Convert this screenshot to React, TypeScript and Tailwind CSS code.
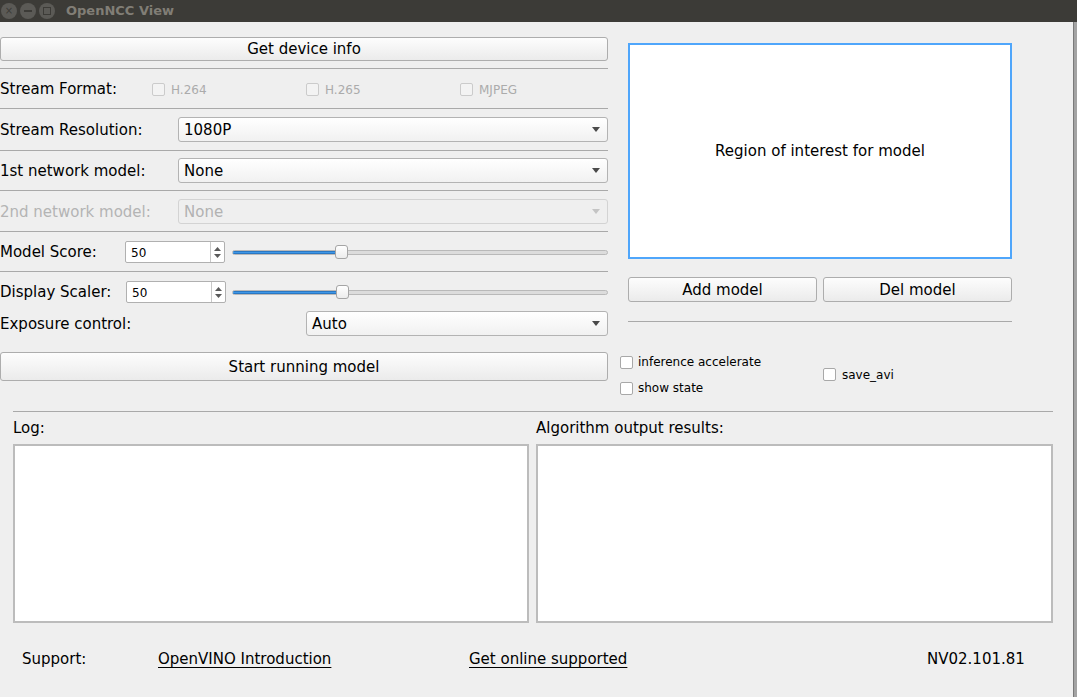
import React from "react";

function Sep({ className = "" }: { className?: string }) {
  return <div className={`h-px bg-[#a9a9a9] ${className}`} />;
}

function PushButton({ label, className = "" }: { label: string; className?: string }) {
  return (
    <div
      className={`flex items-center justify-center rounded-[3px] border border-[#adadad] bg-linear-to-b from-[#fdfdfd] to-[#ebebeb] pt-px text-[15px] text-black ${className}`}
    >
      {label}
    </div>
  );
}

function Arrow({ color }: { color: string }) {
  return (
    <svg width="8" height="5" viewBox="0 0 8 5">
      <polygon points="0,0 8,0 4,5" fill={color} />
    </svg>
  );
}

function Combo({ value, disabled, className = "" }: { value: string; disabled?: boolean; className?: string }) {
  return (
    <div
      className={`flex h-[25px] items-center justify-between rounded-[3px] border pl-[5px] pr-[7px] text-[15px] ${
        disabled
          ? "border-[#d3d3d3] bg-[#efefef] text-[#b2b2b2]"
          : "border-[#b3b3b3] bg-linear-to-b from-white to-[#f1f1f1] text-black"
      } ${className}`}
    >
      <span className="pt-px">{value}</span>
      <Arrow color={disabled ? "#c4c4c4" : "#4a4a4a"} />
    </div>
  );
}

function Check({ label, disabled, gap = "ml-[6px]" }: { label: string; disabled?: boolean; gap?: string }) {
  return (
    <div className="flex items-center">
      <div
        className={`h-[13px] w-[13px] rounded-[2px] border ${
          disabled ? "border-[#cbcbcb] bg-[#f3f3f3]" : "border-[#a8a8a8] bg-white"
        }`}
      />
      <span className={`${gap} text-[12px] ${disabled ? "text-[#ababab]" : "text-black"}`}>{label}</span>
    </div>
  );
}

function SpinBox({ value }: { value: string }) {
  return (
    <div className="flex h-[22px] w-[100px] items-stretch rounded-[2px] border border-[#b0b0b0] bg-white">
      <div className="flex flex-1 items-center pl-[5px] pt-px text-[12px] text-black">{value}</div>
      <div className="flex w-[14px] flex-col items-center justify-center gap-[3px] border-l border-[#c8c8c8]">
        <svg width="7" height="4" viewBox="0 0 7 4">
          <polygon points="0,4 7,4 3.5,0" fill="#5a5a5a" />
        </svg>
        <svg width="7" height="4" viewBox="0 0 7 4">
          <polygon points="0,0 7,0 3.5,4" fill="#5a5a5a" />
        </svg>
      </div>
    </div>
  );
}

function Slider({ pos }: { pos: number }) {
  return (
    <div className="relative flex h-[16px] flex-1 items-center">
      <div className="flex h-[5px] w-full overflow-hidden rounded-full border border-[#b9b9b9] bg-[#dcdcdc]">
        <div className="h-full border-y border-[#2a78c4] bg-[#3f97e6]" style={{ width: pos + 4 }} />
      </div>
      <div
        className="absolute top-[1px] h-[14px] w-[13px] rounded-[3px] border border-[#a5a5a5] bg-linear-to-b from-white to-[#ececec]"
        style={{ left: pos }}
      />
    </div>
  );
}

export default function App() {
  return (
    <div className="flex h-[697px] w-[1077px] flex-col overflow-hidden bg-[#efefef] font-['DejaVu_Sans',sans-serif] text-black">
      {/* title bar */}
      <div className="flex h-[22px] items-center bg-[#3c3b37]">
        <div className="ml-[1px] flex items-center gap-[3px]">
          <div className="flex h-[16px] w-[16px] items-center justify-center rounded-full bg-[#5b5a56] text-[10px] leading-none text-[#3c3b37]">
            ×
          </div>
          <div className="flex h-[16px] w-[16px] items-center justify-center rounded-full bg-[#5b5a56]">
            <div className="h-[1.5px] w-[8px] bg-[#3c3b37]" />
          </div>
          <div className="flex h-[16px] w-[16px] items-center justify-center rounded-full bg-[#5b5a56]">
            <div className="h-[8px] w-[8px] border border-[#3c3b37]" />
          </div>
        </div>
        <span className="ml-[11px] text-[13px] font-bold text-[#817e76]">OpenNCC View</span>
      </div>

      <div className="flex flex-1">
        <div className="flex w-[1073px] flex-col">
          {/* top section */}
          <div className="flex h-[389px] items-start">
            {/* left column */}
            <div className="flex w-[608px] flex-col text-[15px]">
              <PushButton label="Get device info" className="mt-[15px] h-[24px]" />
              <Sep className="mt-[7px]" />
              <div className="flex h-[39px] items-center pt-[2px]">
                <span className="w-[152px]">Stream Format:</span>
                <div className="w-[154px]">
                  <Check label="H.264" disabled />
                </div>
                <div className="w-[154px]">
                  <Check label="H.265" disabled />
                </div>
                <Check label="MJPEG" disabled />
              </div>
              <Sep />
              <div className="mt-[8px] flex h-[25px] items-center">
                <span className="w-[178px] pt-px">Stream Resolution:</span>
                <Combo value="1080P" className="flex-1" />
              </div>
              <Sep className="mt-[8px]" />
              <div className="mt-[7px] flex h-[25px] items-center">
                <span className="w-[178px] pt-px">1st network model:</span>
                <Combo value="None" className="flex-1" />
              </div>
              <Sep className="mt-[7px]" />
              <div className="mt-[8px] flex h-[25px] items-center">
                <span className="w-[178px] pt-px text-[#b4b4b4]">2nd network model:</span>
                <Combo value="None" disabled className="flex-1" />
              </div>
              <Sep className="mt-[7px]" />
              <div className="mt-[9px] flex h-[22px] items-center">
                <span className="w-[125px] pt-px">Model Score:</span>
                <SpinBox value="50" />
                <div className="ml-[7px] flex flex-1">
                  <Slider pos={103} />
                </div>
              </div>
              <Sep className="mt-[8px]" />
              <div className="mt-[9px] flex h-[22px] items-center">
                <span className="w-[126px] pt-px">Display Scaler:</span>
                <SpinBox value="50" />
                <div className="ml-[6px] flex flex-1">
                  <Slider pos={104} />
                </div>
              </div>
              <div className="mt-[8px] flex h-[25px] items-center">
                <span className="w-[306px] pt-px">Exposure control:</span>
                <Combo value="Auto" className="flex-1" />
              </div>
              <PushButton label="Start running model" className="mt-[16px] h-[29px]" />
            </div>

            {/* right column */}
            <div className="ml-[12px] flex w-[392px] flex-col">
              <div className="ml-[8px] mt-[21px] flex h-[216px] items-center justify-center border-2 border-[#4fa6fb] bg-white text-[15px]">
                Region of interest for model
              </div>
              <div className="ml-[8px] mt-[18px] flex gap-[6px]">
                <PushButton label="Add model" className="h-[25px] w-[189px]" />
                <PushButton label="Del model" className="h-[25px] w-[189px]" />
              </div>
              <Sep className="ml-[8px] mt-[19px]" />
              <div className="mt-[31px] flex">
                <div className="flex w-[203px] flex-col gap-[13px]">
                  <div className="h-[13px]">
                    <Check label="inference accelerate" gap="ml-[5px]" />
                  </div>
                  <div className="h-[13px]">
                    <Check label="show state" gap="ml-[5px]" />
                  </div>
                </div>
                <div className="flex items-center pt-[4px]">
                  <Check label="save_avi" gap="ml-[6px]" />
                </div>
              </div>
            </div>
          </div>

          {/* lower section */}
          <div className="ml-[13px] flex w-[1040px] flex-col">
            <Sep />
            <div className="flex h-[32px] items-center pt-px text-[15px]">
              <span className="w-[523px]">Log:</span>
              <span>Algorithm output results:</span>
            </div>
            <div className="flex h-[179px] gap-[7px]">
              <div className="w-[516px] border-2 border-[#bcbcbc] bg-white" />
              <div className="flex-1 border-2 border-[#bcbcbc] bg-white" />
            </div>
          </div>

          {/* footer */}
          <div className="flex h-[72px] items-center pl-[22px] pt-px text-[15px]">
            <span className="w-[136px]">Support:</span>
            <div className="w-[311px]">
              <span className="underline underline-offset-[3px]">OpenVINO Introduction</span>
            </div>
            <div className="w-[458px]">
              <span className="underline underline-offset-[3px]">Get online supported</span>
            </div>
            <span>NV02.101.81</span>
          </div>
        </div>
        <div className="w-[4px] border-l border-[#7a7a7a] bg-[#a3a3a3]" />
      </div>
    </div>
  );
}
